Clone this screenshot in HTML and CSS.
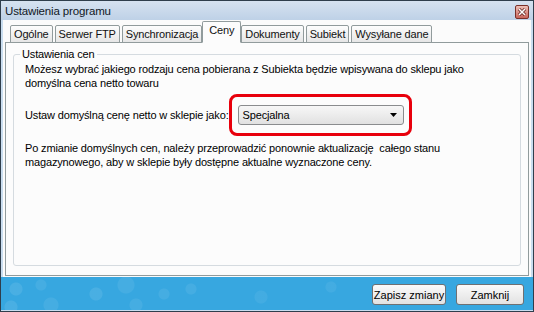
FILE: index.html
```html
<!DOCTYPE html>
<html lang="pl">
<head>
  <meta charset="UTF-8">
  <title>Ustawienia programu</title>
  <link rel="stylesheet" href="styles.css">
</head>
<body>
  <div class="window">
    <div class="titlebar">
      <span class="title">Ustawienia programu</span>
      <span class="close">
        <svg width="10" height="10" viewBox="0 0 10 10">
          <path d="M2 2 L8 8 M8 2 L2 8" stroke="#5a1a14" stroke-width="3"/>
          <path d="M2 2 L8 8 M8 2 L2 8" stroke="#fff" stroke-width="1.6"/>
        </svg>
      </span>
    </div>

    <div class="client">
      <div class="tabs">
        <div class="tab">Ogólne</div>
        <div class="tab">Serwer FTP</div>
        <div class="tab">Synchronizacja</div>
        <div class="tab active">Ceny</div>
        <div class="tab">Dokumenty</div>
        <div class="tab">Subiekt</div>
        <div class="tab">Wysyłane dane</div>
      </div>

      <div class="panel">
        <fieldset class="group">
          <legend>Ustawienia cen</legend>
          <p class="text">Możesz wybrać jakiego rodzaju cena pobierana z Subiekta będzie wpisywana do sklepu jako<br>domyślna cena netto towaru</p>
          <div class="price-row">
            <span>Ustaw domyślną cenę netto w sklepie jako:</span>
            <div class="highlight">
              <div class="combo">
                <span>Specjalna</span>
                <svg width="7" height="4" viewBox="0 0 7 4"><path d="M0 0 H7 L3.5 4 Z" fill="#000"/></svg>
              </div>
            </div>
          </div>
          <p class="text note">Po zmianie domyślnych cen, należy przeprowadzić ponownie aktualizację&nbsp; całego stanu<br>magazynowego, aby w sklepie były dostępne aktualne wyznaczone ceny.</p>
        </fieldset>
      </div>
    </div>

    <div class="footer">
      <button class="button save">Zapisz zmiany</button>
      <button class="button close-btn">Zamknij</button>
    </div>
  </div>
</body>
</html>
```

FILE: styles.css
```css
body {
  margin: 0;
  font-family: 'Liberation Sans', Arial, sans-serif;
  font-size: 11px;
  letter-spacing: -0.15px;
  color: #000;
}
.window {
  width: 534px;
  height: 312px;
  box-sizing: border-box;
  border: 1px solid #2f3e4c;
  background-color: #c9ddef;
  display: flex;
  flex-direction: column;
}
.titlebar {
  height: 19px;
  display: flex;
  align-items: center;
  justify-content: space-between;
  padding: 0 4px;
  background: linear-gradient(#d6e2f0, #bed1e7);
}
.title {
  font-size: 11.5px;
  color: #10171f;
}
.close {
  width: 12px;
  height: 12px;
  border: 1px solid #7a3129;
  border-radius: 2px;
  background: linear-gradient(#eec0b8, #c8645a);
  display: flex;
  align-items: center;
  justify-content: center;
  margin-top: 3px;
}
.client {
  flex: 1;
  margin: 0 2px;
  padding: 3px 2px 1px;
  background-color: #fbfbfb;
  display: flex;
  flex-direction: column;
}
.tabs {
  display: flex;
  align-items: flex-end;
  gap: 2px;
  height: 20px;
  padding-left: 5px;
  position: relative;
  z-index: 1;
  margin-bottom: -1px;
}
.tab {
  height: 16px;
  line-height: 16px;
  padding: 0 3px;
  border: 1px solid #919b9c;
  border-radius: 2px 2px 0 0;
  background: linear-gradient(#fdfdfd, #e6e6e6);
  color: #111;
}
.tab.active {
  height: 20px;
  line-height: 16px;
  margin: 0 -2px;
  padding: 0 6px;
  background: #fcfcfc;
  border-bottom-color: #fcfcfc;
}
.panel {
  flex: 1;
  border: 1px solid #919b9c;
  background-color: #fcfcfc;
  padding: 5px 7px 9px;
  display: flex;
  flex-direction: column;
}
.group {
  flex: 1;
  margin: 0;
  padding: 1px 11px 0;
  border: 1px solid #d5dbe0;
  border-radius: 3px;
}
.group legend {
  margin-left: -5px;
  padding: 0 2px;
  line-height: 13px;
}
.text {
  margin: 0;
  line-height: 14px;
}
.price-row {
  display: flex;
  align-items: center;
  margin-top: 4px;
}
.highlight {
  border: 3px solid #e8000c;
  border-radius: 8px;
  padding: 8px 5px 8px 6px;
}
.combo {
  width: 166px;
  height: 20px;
  box-sizing: border-box;
  border: 1px solid #8a8c8e;
  border-radius: 3px;
  background: linear-gradient(#f7f7f7, #e1e1e1);
  display: flex;
  align-items: center;
  justify-content: space-between;
  padding: 0 6px 0 4px;
}
.note {
  margin-top: 5px;
}
.footer {
  height: 33px;
  display: flex;
  justify-content: flex-end;
  align-items: flex-start;
  gap: 10px;
  padding: 7px 9px 0 0;
  box-sizing: border-box;
  background-color: #37a7e0;
  background-image:
    radial-gradient(circle at 15px 12px, rgba(255,255,255,0.09) 6px, transparent 7px),
    radial-gradient(circle at 40px 8px, rgba(255,255,255,0.07) 5px, transparent 6px),
    radial-gradient(circle at 10px 30px, rgba(255,255,255,0.09) 6px, transparent 7px),
    radial-gradient(circle at 50px 28px, rgba(255,255,255,0.07) 7px, transparent 8px),
    radial-gradient(circle at 95px 17px, rgba(255,255,255,0.09) 6px, transparent 7px),
    radial-gradient(circle at 125px 8px, rgba(255,255,255,0.07) 8px, transparent 9px),
    radial-gradient(circle at 135px 28px, rgba(255,255,255,0.07) 6px, transparent 7px),
    radial-gradient(circle at 163px 17px, rgba(255,255,255,0.07) 5px, transparent 6px),
    radial-gradient(circle at 190px 12px, rgba(255,255,255,0.07) 5px, transparent 6px),
    radial-gradient(circle at 260px 20px, rgba(255,255,255,0.06) 6px, transparent 7px),
    radial-gradient(circle at 330px 10px, rgba(255,255,255,0.06) 5px, transparent 6px);
  margin-bottom: 1px;
}
.button {
  height: 21px;
  border: 1px solid #6f7072;
  border-radius: 3px;
  background: linear-gradient(#fafafa, #e2e2e2);
  font-family: 'Liberation Sans', Arial, sans-serif;
  font-size: 11px;
  color: #000;
  padding: 0;
  white-space: nowrap;
}
.save {
  width: 74px;
}
.close-btn {
  width: 68px;
}
```
